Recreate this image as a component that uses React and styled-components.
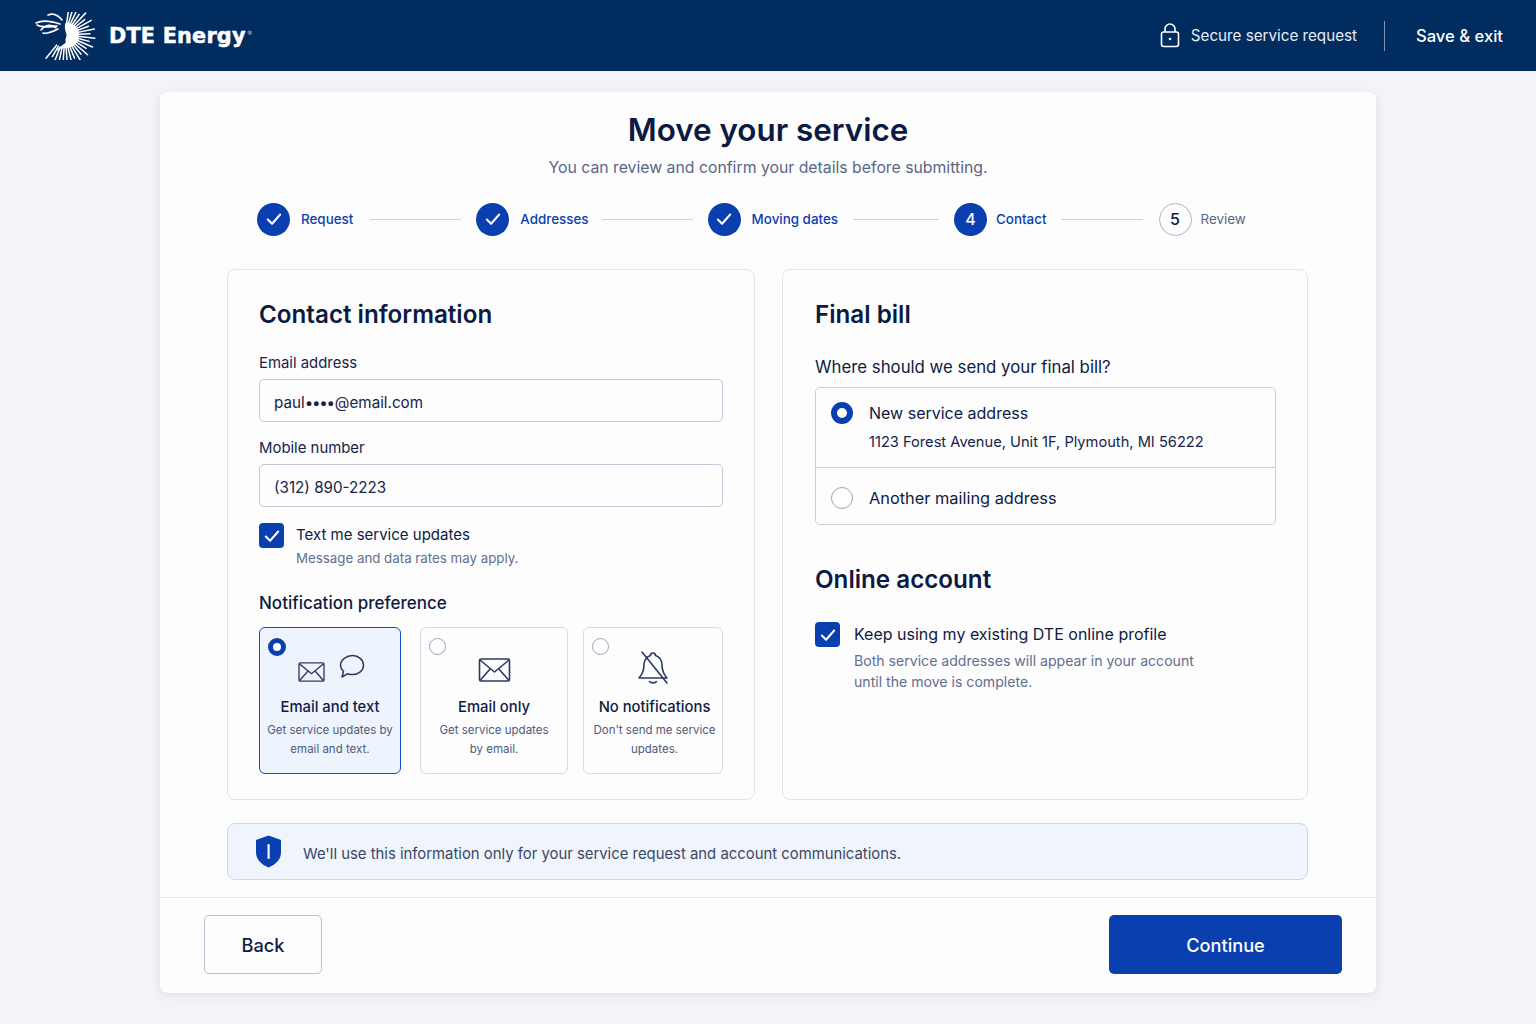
import React from 'react'
import styled, { createGlobalStyle } from 'styled-components'

const GlobalStyle = createGlobalStyle`
	* {
		box-sizing: border-box;
	}
	body {
		margin: 0;
		background: #f3f4f8;
		font-family: Inter, "Noto Sans", sans-serif;
		color: #0e1b42;
		-webkit-font-smoothing: antialiased;
	}
`

const Page = styled.div`
	width: 1536px;
	height: 1024px;
	overflow: hidden;
`

const Header = styled.header`
	height: 71px;
	background: #002c60;
	display: flex;
	align-items: center;
	justify-content: space-between;
	padding: 0 33px 0 34px;
	color: #fff;
`

const Brand = styled.div`
	display: flex;
	align-items: center;
	gap: 13px;
`

const BrandName = styled.span`
	font-family: 'DejaVu Sans', sans-serif;
	font-weight: 700;
	font-size: 20.8px;
	letter-spacing: 0.2px;
	-webkit-text-stroke: 0.5px #fff;
	sup {
		font-size: 6px;
		color: #9db0cc;
		-webkit-text-stroke: 0;
		vertical-align: 8px;
		margin-left: 1px;
	}
`

const HeaderRight = styled.div`
	display: flex;
	align-items: center;
`

const Secure = styled.div`
	display: flex;
	align-items: center;
	gap: 11px;
	font-size: 15.2px;
	color: #e8edf5;
	padding-right: 27px;
	border-right: 1px solid #7f93b2;
	height: 30px;
`

const SaveExit = styled.a`
	font-size: 16.6px;
	font-weight: 500;
	color: #fff;
	padding-left: 31px;
`

const Main = styled.main`
	width: 1216px;
	height: 901px;
	margin: 21px 0 0 160px;
	background: #fdfdfe;
	border-radius: 8px;
	box-shadow: 0 2px 10px rgba(30, 45, 90, 0.1);
	display: flex;
	flex-direction: column;
`

const Title = styled.h1`
	margin: 18px 0 0;
	font-size: 31.4px;
	line-height: 40px;
	font-weight: 600;
	text-align: center;
	color: #0b1a42;
`

const Subtitle = styled.p`
	margin: 7px 0 0;
	font-size: 15.8px;
	line-height: 22px;
	text-align: center;
	color: #5a6685;
`

const Stepper = styled.ol`
	list-style: none;
	margin: 23px 0 0 97px;
	padding: 0;
	display: flex;
	align-items: center;
	height: 34px;
`

const Step = styled.li`
	display: flex;
	align-items: center;
	gap: ${(props) => props.$gap}px;
	font-size: 13.4px;
	font-weight: ${(props) => (props.$todo ? 400 : 500)};
	color: ${(props) => (props.$todo ? '#5a6685' : '#0a3fb0')};
`

const StepDot = styled.span`
	width: 33px;
	height: 33px;
	border-radius: 50%;
	display: flex;
	align-items: center;
	justify-content: center;
	font-size: 16px;
	font-weight: 500;
	background: ${(props) => (props.$todo ? 'transparent' : '#0a3fb0')};
	color: ${(props) => (props.$todo ? '#0e1b42' : '#fff')};
	border: ${(props) => (props.$todo ? '1px solid #aab2c6' : 'none')};
`

const StepLine = styled.span`
	height: 1px;
	background: #ced3e0;
	width: ${(props) => props.$width}px;
	margin: 0 ${(props) => props.$right}px 0 ${(props) => props.$left}px;
`

const Columns = styled.div`
	display: grid;
	grid-template-columns: 528px 526px;
	gap: 27px;
	margin: 33px 67px 0;
	height: 531px;
`

const Panel = styled.section`
	border: 1px solid #e2e5ee;
	border-radius: 8px;
	padding: 28px 31px 0 ${(props) => props.$left}px;
	background: #fdfdfe;
`

const PanelTitle = styled.h2`
	margin: ${(props) => props.$top || 0}px 0 0;
	font-size: 24.2px;
	line-height: 34px;
	font-weight: 600;
	color: #0b1a42;
`

const FieldLabel = styled.label`
	display: block;
	font-size: 14.9px;
	line-height: 20px;
	color: #17244a;
	margin: ${(props) => props.$top}px 0 6px;
`

const Field = styled.div`
	display: flex;
	align-items: center;
	width: 464px;
	height: 43px;
	border: 1px solid #c3c9d8;
	border-radius: 5px;
	background: #fdfdfe;
	padding: 3px 14px 0;
	font-size: 15.2px;
	color: #17244a;
	white-space: pre;
`

const Masked = styled.span`
	letter-spacing: -1.25px;
	margin-right: 1px;
`

const CheckRow = styled.div`
	display: flex;
	gap: ${(props) => props.$gap}px;
	margin-top: ${(props) => props.$top}px;
`

const CheckBox = styled.span`
	flex: none;
	width: 25px;
	height: 25px;
	border-radius: 4px;
	background: #0a3fb0;
	display: flex;
	align-items: center;
	justify-content: center;
`

const CheckLabel = styled.div`
	font-size: ${(props) => props.$size}px;
	line-height: 22px;
	padding-top: 1px;
	color: #0e1b42;
`

const CheckHint = styled.div`
	font-size: ${(props) => props.$size}px;
	line-height: ${(props) => props.$line}px;
	color: #626e8e;
	margin-top: ${(props) => props.$top}px;
`

const SectionLabel = styled.h3`
	margin: 23px 0 12px;
	font-size: 17px;
	line-height: 24px;
	font-weight: 500;
	color: #0e1b42;
`

const Choices = styled.div`
	display: flex;
	height: 147px;
`

const Choice = styled.div`
	position: relative;
	flex: none;
	width: ${(props) => props.$width}px;
	margin-left: ${(props) => props.$offset}px;
	border: ${(props) => (props.$active ? '1.5px solid #0f4fcf' : '1px solid #d5d9e5')};
	border-radius: 6px;
	background: ${(props) => (props.$active ? '#eef4fe' : '#fdfdfe')};
	display: flex;
	flex-direction: column;
	align-items: center;
	text-align: center;
	padding: 69px 0 0 ${(props) => props.$indent || 0}px;
`

const ChoiceRadio = styled.span`
	position: absolute;
	top: 10px;
	left: 8px;
	width: ${(props) => (props.$on ? 18 : 17)}px;
	height: ${(props) => (props.$on ? 18 : 17)}px;
	border-radius: 50%;
	background: #fff;
	border: ${(props) => (props.$on ? '5px solid #0a3fb0' : '1px solid #9aa3b8')};
`

const ChoiceIcons = styled.span`
	position: absolute;
	top: ${(props) => props.$top}px;
	left: 0;
	right: 0;
	display: flex;
	justify-content: center;
	color: #2b3a63;
`

const MailPair = styled.span`
	display: flex;
	align-items: flex-end;
	gap: 14px;
	margin-left: 3px;
`

const BubbleWrap = styled.span`
	display: flex;
	margin-bottom: 3px;
`

const ChoiceTitle = styled.div`
	font-size: 14.8px;
	line-height: 20px;
	font-weight: 500;
	color: #0e1b42;
`

const ChoiceText = styled.div`
	font-size: 11.5px;
	line-height: 19px;
	color: #4d5a7c;
	margin-top: 4px;
	white-space: pre-line;
`

const Question = styled.p`
	margin: 23px 0 8px;
	font-size: 16.8px;
	line-height: 24px;
	color: #0e1b42;
`

const Options = styled.div`
	width: 461px;
	border: 1px solid #c9cedc;
	border-radius: 5px;
`

const Option = styled.div`
	display: flex;
	gap: 16px;
	height: ${(props) => props.$height}px;
	padding: ${(props) => props.$pad}px 15px 0;
	& + & {
		border-top: 1px solid #c9cedc;
	}
`

const OptionRadio = styled.span`
	flex: none;
	width: 22px;
	height: 22px;
	border-radius: 50%;
	background: #fff;
	border: ${(props) => (props.$on ? '6px solid #0a3fb0' : '1px solid #9aa3b8')};
`

const OptionLabel = styled.div`
	font-size: ${(props) => props.$size}px;
	line-height: 22px;
	color: #0e1b42;
`

const OptionDetail = styled.div`
	font-size: 14.65px;
	line-height: 20px;
	color: #17244a;
	margin-top: 8px;
`

const Notice = styled.div`
	margin: 23px 68px 0 67px;
	height: 57px;
	border: 1px solid #c5d8f3;
	border-radius: 8px;
	background: #f0f5fd;
	display: flex;
	align-items: center;
	gap: 21px;
	padding: 0 0 0 27px;
	font-size: 14.87px;
	color: #3b4768;
`

const NoticeText = styled.span`
	margin-top: 5px;
`

const Footer = styled.footer`
	margin-top: 17px;
	border-top: 1px solid #e6e8ef;
	padding: 17px 34px 0 44px;
	display: flex;
	justify-content: space-between;
`

const BackButton = styled.button`
	width: 118px;
	height: 59px;
	border: 1px solid #b9c0d0;
	border-radius: 5px;
	background: #fdfdfe;
	font: 500 18.2px Inter, sans-serif;
	color: #0e1b42;
`

const ContinueButton = styled.button`
	width: 233px;
	height: 59px;
	border: none;
	border-radius: 5px;
	background: #0a3fb0;
	font: 500 18.2px Inter, sans-serif;
	color: #fff;
`

const Tick = () => (
	<svg width="18" height="18" viewBox="0 0 16 16" fill="none">
		<path d="M2.5 8.5 6.3 12.2 13.5 4" stroke="#fff" strokeWidth="1.8" strokeLinecap="round" strokeLinejoin="round" />
	</svg>
)

const rays = Array.from({ length: 25 }, (_, i) => {
	const a = ((-82 + i * 8.8) * Math.PI) / 180
	const outer = i % 2 ? 25 : 30
	return {
		x1: 31 + Math.cos(a) * 13,
		y1: 23 + Math.sin(a) * 13,
		x2: 31 + Math.cos(a) * outer,
		y2: 23 + Math.sin(a) * outer,
	}
})

const Logo = () => (
	<svg width="62" height="48" viewBox="0 0 62 48" fill="none">
		<g stroke="#fff" strokeWidth="1.5" strokeLinecap="round">
			{rays.map((r, i) => (
				<line key={i} x1={r.x1} y1={r.y1} x2={r.x2} y2={r.y2} />
			))}
		</g>
		<path
			d="M32 10C41 11 46 18 45 25C44 32 37 37 29 36L22 39C26 34 30 33 32 30C30 27 34 24 32 21C31 17 30 14 32 10Z"
			fill="#fff"
		/>
		<g stroke="#fff" strokeWidth="1.6" strokeLinecap="round">
			<path d="M14 3C19 1 24 3 28 8" />
			<path d="M2 11C8 8 17 9 26 12" />
			<path d="M3 13C8 16 15 15 23 14" />
			<path d="M9 21C13 22 18 20 24 17" />
			<path d="M7 18C12 12 18 12 22 16" />
		</g>
	</svg>
)

const LockIcon = () => (
	<svg width="20" height="25" viewBox="0 0 20 25" fill="none" stroke="#fff" strokeWidth="1.6">
		<rect x="1.5" y="9" width="17" height="14.5" rx="2.2" />
		<path d="M5 9V6a5 5 0 0 1 10 0v3" />
		<circle cx="10" cy="16" r="1.3" fill="#fff" stroke="none" />
	</svg>
)

const MailIcon = ({ width, height }) => (
	<svg width={width} height={height} viewBox="0 0 32 24" fill="none" stroke="currentColor" strokeWidth="1.6" strokeLinejoin="round">
		<rect x="1" y="1" width="30" height="22" rx="1.5" />
		<path d="M1.5 2 16 14 30.5 2" />
		<path d="M1.5 22.5 12 10.5M30.5 22.5 20 10.5" />
	</svg>
)

const BubbleIcon = () => (
	<svg width="26" height="25" viewBox="0 0 26 25" fill="none" stroke="currentColor" strokeWidth="1.5" strokeLinejoin="round">
		<path d="M13.5 1.5C19.5 1.5 24.5 5.8 24.5 11.2S19.5 20.6 13.5 20.6c-1.7 0-3.3-.3-4.7-.9L3 23l1.5-5.8C2.6 15.5 1.5 13.5 1.5 11.2 1.5 5.8 7.5 1.5 13.5 1.5Z" />
	</svg>
)

const BellOffIcon = () => (
	<svg width="32" height="36" viewBox="0 0 32 36" fill="none" stroke="currentColor" strokeWidth="1.6" strokeLinecap="round" strokeLinejoin="round">
		<path d="M16 3c1.5 0 2.5 1 2.5 2.5C23 7 25 10.5 25 15c0 6 1.5 9 5 13H2c3.5-4 5-7 5-13 0-4.5 2-8 6.5-9.5C13.5 4 14.5 3 16 3Z" />
		<path d="M12.5 31.5c1.5 1.8 5.5 1.8 7 0" />
		<path d="M5 2 30 33" />
	</svg>
)

const ShieldIcon = () => (
	<svg width="27" height="33" viewBox="0 0 27 33" fill="none">
		<path d="M13.5 0.5 26 5v12.5c0 7-5.5 12-12.5 15C6.5 29.5 1 24.5 1 17.5V5Z" fill="#0a3fb0" />
		<rect x="12.5" y="9" width="2.2" height="15" rx="1" fill="#fff" />
	</svg>
)

const steps = [
	{ label: 'Request', gap: 11, line: [91, 17, 15] },
	{ label: 'Addresses', gap: 11, line: [91, 13, 15] },
	{ label: 'Moving dates', gap: 11, line: [86, 15, 15] },
	{ label: 'Contact', gap: 9, number: 4, line: [82, 14, 16] },
	{ label: 'Review', gap: 9, number: 5, todo: true },
]

const choices = [
	{
		title: 'Email and text',
		text: 'Get service updates by\nemail and text.',
		active: true,
		width: 142,
		offset: 0,
		iconTop: 26,
		art: (
			<MailPair>
				<MailIcon width={27} height={20} />
				<BubbleWrap>
					<BubbleIcon />
				</BubbleWrap>
			</MailPair>
		),
	},
	{
		title: 'Email only',
		text: 'Get service updates\nby email.',
		width: 148,
		offset: 19,
		iconTop: 30,
		art: <MailIcon width={33} height={24} />,
	},
	{
		title: 'No notifications',
		text: "Don't send me service\nupdates.",
		width: 140,
		offset: 15,
		indent: 3,
		iconTop: 22,
		art: <BellOffIcon />,
	},
]

const App = () => {
	return (
		<Page>
			<GlobalStyle />
			<Header>
				<Brand>
					<Logo />
					<BrandName>
						DTE Energy<sup>®</sup>
					</BrandName>
				</Brand>
				<HeaderRight>
					<Secure>
						<LockIcon />
						Secure service request
					</Secure>
					<SaveExit>Save &amp; exit</SaveExit>
				</HeaderRight>
			</Header>
			<Main>
				<Title>Move your service</Title>
				<Subtitle>You can review and confirm your details before submitting.</Subtitle>
				<Stepper>
					{steps.map((step) => (
						<React.Fragment key={step.label}>
							<Step $gap={step.gap} $todo={step.todo}>
								<StepDot $todo={step.todo}>{step.number || <Tick />}</StepDot>
								{step.label}
							</Step>
							{step.line && <StepLine $width={step.line[0]} $left={step.line[1]} $right={step.line[2]} />}
						</React.Fragment>
					))}
				</Stepper>
				<Columns>
					<Panel $left={31}>
						<PanelTitle>Contact information</PanelTitle>
						<FieldLabel $top={21}>Email address</FieldLabel>
						<Field>
							paul<Masked>••••</Masked>@email.com
						</Field>
						<FieldLabel $top={16}>Mobile number</FieldLabel>
						<Field>(312) 890-2223</Field>
						<CheckRow $gap={12} $top={16}>
							<CheckBox>
								<Tick />
							</CheckBox>
							<div>
								<CheckLabel $size={15}>Text me service updates</CheckLabel>
								<CheckHint $size={13.3} $line={20} $top={2}>
									Message and data rates may apply.
								</CheckHint>
							</div>
						</CheckRow>
						<SectionLabel>Notification preference</SectionLabel>
						<Choices>
							{choices.map((choice) => (
								<Choice
									key={choice.title}
									$active={choice.active}
									$width={choice.width}
									$offset={choice.offset}
									$indent={choice.indent}
								>
									<ChoiceRadio $on={choice.active} />
									<ChoiceIcons $top={choice.iconTop}>{choice.art}</ChoiceIcons>
									<ChoiceTitle>{choice.title}</ChoiceTitle>
									<ChoiceText>{choice.text}</ChoiceText>
								</Choice>
							))}
						</Choices>
					</Panel>
					<Panel $left={32}>
						<PanelTitle>Final bill</PanelTitle>
						<Question>Where should we send your final bill?</Question>
						<Options>
							<Option $height={79} $pad={14}>
								<OptionRadio $on />
								<div>
									<OptionLabel $size={16}>New service address</OptionLabel>
									<OptionDetail>1123 Forest Avenue, Unit 1F, Plymouth, MI 56222</OptionDetail>
								</div>
							</Option>
							<Option $height={57} $pad={19}>
								<OptionRadio />
								<OptionLabel $size={16.35}>Another mailing address</OptionLabel>
							</Option>
						</Options>
						<PanelTitle $top={38}>Online account</PanelTitle>
						<CheckRow $gap={14} $top={25}>
							<CheckBox>
								<Tick />
							</CheckBox>
							<div>
								<CheckLabel $size={16}>Keep using my existing DTE online profile</CheckLabel>
								<CheckHint $size={14.1} $line={21} $top={5}>
									Both service addresses will appear in your account
									<br />
									until the move is complete.
								</CheckHint>
							</div>
						</CheckRow>
					</Panel>
				</Columns>
				<Notice>
					<ShieldIcon />
					<NoticeText>We'll use this information only for your service request and account communications.</NoticeText>
				</Notice>
				<Footer>
					<BackButton>Back</BackButton>
					<ContinueButton>Continue</ContinueButton>
				</Footer>
			</Main>
		</Page>
	)
}

export default App
